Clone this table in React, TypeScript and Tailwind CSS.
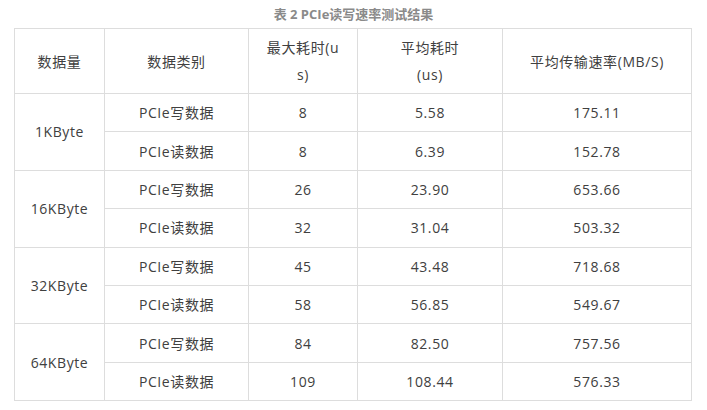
import React from 'react'

interface Row {
  kind: string
  max: string
  avg: string
  rate: string
}

interface Group {
  size: string
  rows: Row[]
}

const groups: Group[] = [
  { size: '1KByte', rows: [
    { kind: 'PCIe写数据', max: '8', avg: '5.58', rate: '175.11' },
    { kind: 'PCIe读数据', max: '8', avg: '6.39', rate: '152.78' },
  ] },
  { size: '16KByte', rows: [
    { kind: 'PCIe写数据', max: '26', avg: '23.90', rate: '653.66' },
    { kind: 'PCIe读数据', max: '32', avg: '31.04', rate: '503.32' },
  ] },
  { size: '32KByte', rows: [
    { kind: 'PCIe写数据', max: '45', avg: '43.48', rate: '718.68' },
    { kind: 'PCIe读数据', max: '58', avg: '56.85', rate: '549.67' },
  ] },
  { size: '64KByte', rows: [
    { kind: 'PCIe写数据', max: '84', avg: '82.50', rate: '757.56' },
    { kind: 'PCIe读数据', max: '109', avg: '108.44', rate: '576.33' },
  ] },
]

const cell = 'border border-[#dddddd] text-center align-middle p-0'

export default function App() {
  return (
    <div
      className="w-[707px] h-[410px] bg-white text-[#404040]"
      style={{ fontFamily: '"Open Sans", "Noto Sans CJK SC", sans-serif' }}
    >
      <div className="h-[28px] flex items-center justify-center pt-[2px] text-[13px] font-bold text-[#8a8a8a]">
        表 2 PCIe读写速率测试结果
      </div>
      <table className="ml-[14px] border-collapse table-fixed w-[677px] text-[14px] tracking-[0.6px]">
        <colgroup>
          <col className="w-[90px]" />
          <col className="w-[144px]" />
          <col className="w-[109px]" />
          <col className="w-[145px]" />
          <col className="w-[189px]" />
        </colgroup>
        <thead>
          <tr className="h-[65px] leading-[27px]">
            <th className={`${cell} font-normal`}>数据量</th>
            <th className={`${cell} font-normal`}>数据类别</th>
            <th className={`${cell} font-normal`}>最大耗时(u<br />s)</th>
            <th className={`${cell} font-normal`}>平均耗时<br />(us)</th>
            <th className={`${cell} font-normal`}>平均传输速率(MB/S)</th>
          </tr>
        </thead>
        <tbody>
          {groups.map(g =>
            g.rows.map((r, i) => (
              <tr key={g.size + i} className="h-[38.4px]">
                {i === 0 && <td rowSpan={2} className={cell}>{g.size}</td>}
                <td className={cell}>{r.kind}</td>
                <td className={cell}>{r.max}</td>
                <td className={cell}>{r.avg}</td>
                <td className={cell}>{r.rate}</td>
              </tr>
            ))
          )}
        </tbody>
      </table>
    </div>
  )
}
